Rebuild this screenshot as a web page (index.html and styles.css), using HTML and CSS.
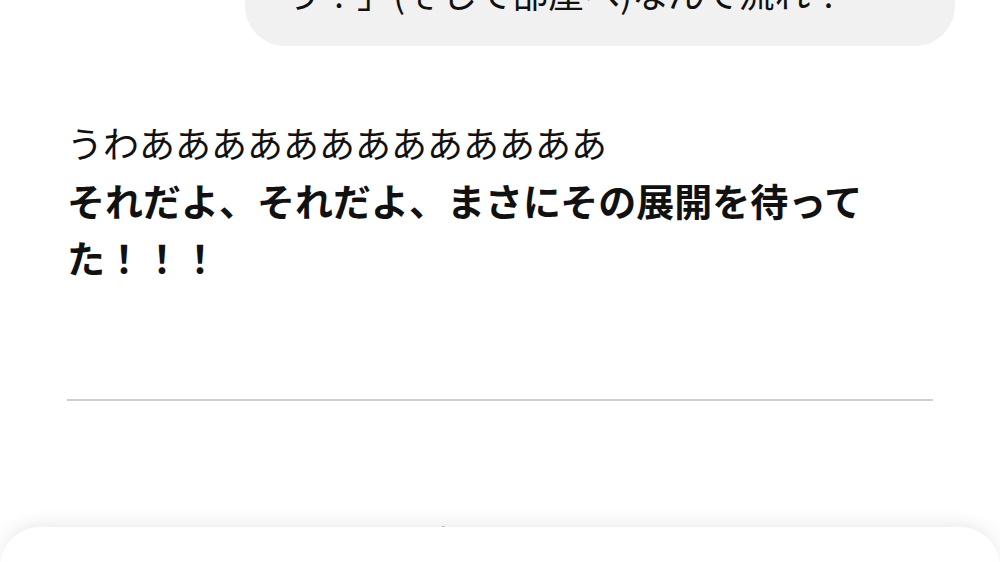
FILE: index.html
```html
<!DOCTYPE html>
<html lang="ja">
<head>
  <meta charset="UTF-8" />
  <meta name="viewport" content="width=device-width, initial-scale=1.0" />
  <title>Chat</title>
  <link rel="stylesheet" href="styles.css">
</head>
<body>
  <div class="thread">
    <div class="bubble user">
      <p>「ねえ、今日はもう帰らないでしょ<br>う！」(そして部屋へ)なんて流れ！</p>
    </div>

    <div class="reply">
      <p>うわあああああああああああああ</p>
      <p class="strong">それだよ、それだよ、まさにその展開を待ってた！！！</p>
    </div>

    <hr class="divider" />

    <div class="reply">
      <p>で、そのまま二人は「今夜は離さない」って流れになって、</p>
    </div>
  </div>

  <div class="sheet"></div>
</body>
</html>
```

FILE: styles.css
```css
/* Base */
* { margin: 0; padding: 0; box-sizing: border-box; }
html, body { height: 100%; overflow: hidden; }
body {
  font-family: "Noto Sans CJK JP", "Noto Sans", sans-serif;
  background: #fff;
  color: #111;
  font-size: 36px;
  line-height: 57px;
}

/* Message list (scrolled) */
.thread {
  padding: 0 67px;
  margin-top: -93px;
}

/* User bubble */
.bubble {
  background: #f1f1f1;
  border-radius: 40px;
}
.bubble.user {
  margin-left: 178px;
  margin-right: -22px;
  padding: 0 45px 25px 40px;
}

/* Assistant reply */
.reply {
  margin-top: 68px;
}
.reply .strong {
  font-size: 38px;
  font-weight: 700;
}

.divider {
  border: none;
  height: 2px;
  background: #cfcfcf;
  margin-top: 114px;
}
.divider + .reply {
  margin-top: 113px;
}

/* Bottom sheet over the list */
.sheet {
  position: fixed;
  left: 0;
  right: 0;
  top: 527px;
  bottom: -40px;
  background: #fff;
  border-radius: 40px 40px 0 0;
  box-shadow: 0 -4px 18px rgba(0, 0, 0, 0.08);
}
```
